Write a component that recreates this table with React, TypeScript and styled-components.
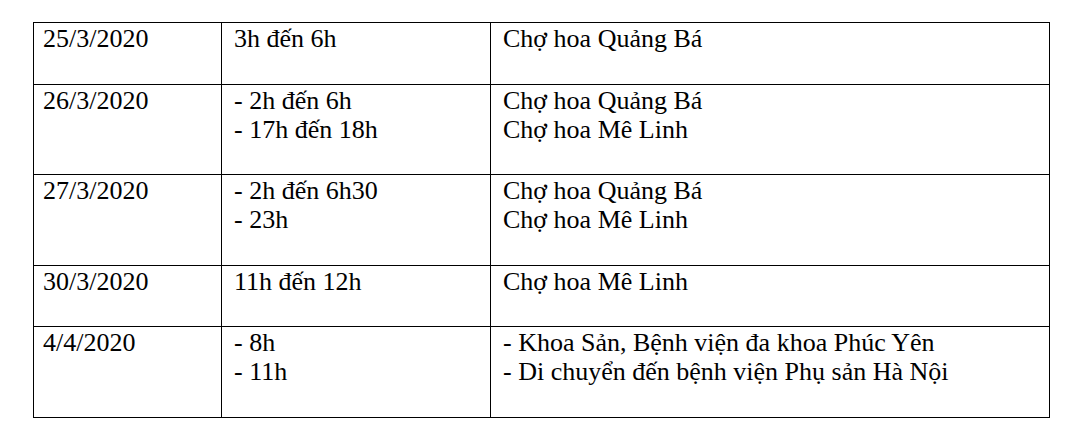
import React from "react";
import styled, { createGlobalStyle } from "styled-components";

const GlobalStyle = createGlobalStyle`
  html, body {
    margin: 0;
    padding: 0;
    background: #ffffff;
  }
`;

const Page = styled.div`
  padding: 22px 0 0 33px;
  color: #000000;
`;

const Table = styled.table`
  border-collapse: collapse;
  table-layout: fixed;
  width: 1016px;
`;

const Cell = styled.td<{ $padLeft: number }>`
  border: 1px solid #000000;
  vertical-align: top;
  padding: 1px 8px 30.5px ${(p) => p.$padLeft}px;
  font-family: "Liberation Serif", Tinos, "DejaVu Serif", serif;
  font-size: 26px;
  line-height: 29px;
  color: #000000;
  white-space: nowrap;
`;

const Line = styled.div`
  display: block;
`;

type Row = { date: string; times: string[]; places: string[] };

const rows: Row[] = [
  { date: "25/3/2020", times: ["3h đến 6h"], places: ["Chợ hoa Quảng Bá"] },
  {
    date: "26/3/2020",
    times: ["- 2h đến 6h", "- 17h đến 18h"],
    places: ["Chợ hoa Quảng Bá", "Chợ hoa Mê Linh"],
  },
  {
    date: "27/3/2020",
    times: ["- 2h đến 6h30", "- 23h"],
    places: ["Chợ hoa Quảng Bá", "Chợ hoa Mê Linh"],
  },
  { date: "30/3/2020", times: ["11h đến 12h"], places: ["Chợ hoa Mê Linh"] },
  {
    date: "4/4/2020",
    times: ["- 8h", "- 11h"],
    places: [
      "- Khoa Sản, Bệnh viện đa khoa Phúc Yên",
      "- Di chuyển đến bệnh viện Phụ sản Hà Nội",
    ],
  },
];

export default function App() {
  return (
    <>
      <GlobalStyle />
      <Page>
        <Table>
          <colgroup>
            <col style={{ width: 188 }} />
            <col style={{ width: 269 }} />
            <col style={{ width: 559 }} />
          </colgroup>
          <tbody>
            {rows.map((r) => (
              <tr key={r.date}>
                <Cell $padLeft={9}>
                  <Line>{r.date}</Line>
                </Cell>
                <Cell $padLeft={12}>
                  {r.times.map((t) => (
                    <Line key={t}>{t}</Line>
                  ))}
                </Cell>
                <Cell $padLeft={12}>
                  {r.places.map((t) => (
                    <Line key={t}>{t}</Line>
                  ))}
                </Cell>
              </tr>
            ))}
          </tbody>
        </Table>
      </Page>
    </>
  );
}
